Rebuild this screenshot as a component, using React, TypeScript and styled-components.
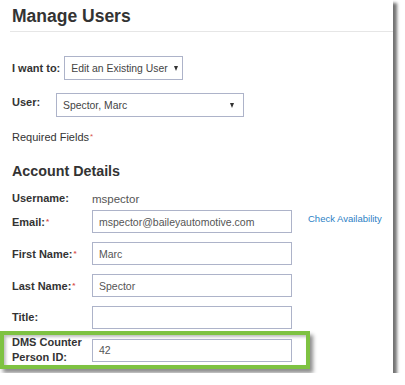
import React from "react";
import styled, { createGlobalStyle } from "styled-components";

const GlobalStyle = createGlobalStyle`
  body {
    margin: 0;
    background: #ffffff;
    font-family: "Liberation Sans", Arial, sans-serif;
  }
`;

const Panel = styled.div`
  width: 393px;
  height: 373px;
  box-sizing: border-box;
  padding-left: 12px;
  background: #ffffff;
  box-shadow: 4px 3px 3px rgba(0, 0, 0, 0.55);
`;

const Header = styled.div`
  margin-left: -2px;
  padding: 6px 0 5px 2px;
  border-bottom: 1px solid #e6e6e6;
`;

const Title = styled.h1`
  margin: 0;
  font-size: 17.5px;
  line-height: 20px;
  font-weight: bold;
  color: #333333;
`;

const Form = styled.div`
  display: flex;
  flex-direction: column;
  padding-top: 24px;
`;

const SelectRow = styled.div<{ $gap: number }>`
  display: flex;
  align-items: center;
  gap: ${(p) => p.$gap}px;
  margin-bottom: 13px;
`;

const Label = styled.span`
  flex-shrink: 0;
  white-space: nowrap;
  font-size: 11px;
  font-weight: bold;
  color: #333333;
  line-height: 15px;
`;

const Required = styled.span`
  color: #d9534f;
  font-size: 8px;
  vertical-align: 2px;
  margin-left: 1px;
`;

const Select = styled.div<{ $width: number }>`
  display: flex;
  align-items: center;
  justify-content: space-between;
  gap: 6px;
  flex-shrink: 0;
  box-sizing: border-box;
  width: ${(p) => p.$width}px;
  height: 24px;
  padding: 0 9px 0 6px;
  border: 1px solid #adb3c9;
  font-size: 10.4px;
  color: #444444;
  white-space: nowrap;
`;

const Caret = styled.span`
  flex-shrink: 0;
  width: 0;
  height: 0;
  border-left: 2.5px solid transparent;
  border-right: 2.5px solid transparent;
  border-top: 5px solid #333333;
`;

const Note = styled.div`
  font-size: 11px;
  line-height: 14px;
  color: #333333;
`;

const Section = styled.h2`
  margin: 18px 0 11px;
  font-size: 14.3px;
  line-height: 18px;
  font-weight: bold;
  color: #333333;
`;

const Fields = styled.div`
  display: flex;
  flex-direction: column;
  gap: 9px;
`;

const FieldRow = styled.div<{ $highlight?: boolean }>`
  display: flex;
  align-items: center;
  min-height: 23px;
  ${(p) =>
    p.$highlight &&
    `
    width: 310px;
    box-sizing: border-box;
    margin: -7px 0 0 -12px;
    padding: 0 14px 0 8px;
    border: 4px solid #7ec242;
    box-shadow: 3px 4px 4px rgba(0, 0, 0, 0.45),
      inset 2px 2px 3px rgba(0, 0, 0, 0.25);
  `}
`;

const FieldLabel = styled(Label)`
  width: 80px;
`;

const Value = styled.span`
  font-size: 11.5px;
  color: #555555;
`;

const Input = styled.div`
  display: flex;
  align-items: center;
  box-sizing: border-box;
  width: 200px;
  height: 23px;
  padding: 0 6px;
  border: 1px solid #adb3c9;
  font-size: 10.5px;
  color: #555555;
`;

const Link = styled.a`
  margin-left: 16px;
  margin-top: -6px;
  font-size: 9.5px;
  color: #2d7fc5;
  text-decoration: none;
  white-space: nowrap;
`;

type Field = {
  label: string;
  value: string;
  required?: boolean;
};

const fields: Field[] = [
  { label: "First Name:", value: "Marc", required: true },
  { label: "Last Name:", value: "Spector", required: true },
  { label: "Title:", value: "" },
];

const App: React.FC = () => {
  return (
    <>
      <GlobalStyle />
      <Panel>
        <Header>
          <Title>Manage Users</Title>
        </Header>
        <Form>
          <SelectRow $gap={4}>
            <Label>I want to:</Label>
            <Select $width={119}>
              Edit an Existing User
              <Caret />
            </Select>
          </SelectRow>
          <SelectRow $gap={14}>
            <Label style={{ width: 30, marginTop: -6 }}>User:</Label>
            <Select $width={188}>
              Spector, Marc
              <Caret />
            </Select>
          </SelectRow>
          <Note>
            Required Fields<Required>*</Required>
          </Note>
          <Section>Account Details</Section>
          <Fields>
            <FieldRow style={{ minHeight: 14, marginBottom: -5 }}>
              <FieldLabel>Username:</FieldLabel>
              <Value>mspector</Value>
            </FieldRow>
            <FieldRow>
              <FieldLabel>
                Email:<Required>*</Required>
              </FieldLabel>
              <Input>mspector@baileyautomotive.com</Input>
              <Link href="#">Check Availability</Link>
            </FieldRow>
            {fields.map((f) => (
              <FieldRow key={f.label}>
                <FieldLabel>
                  {f.label}
                  {f.required && <Required>*</Required>}
                </FieldLabel>
                <Input>{f.value}</Input>
              </FieldRow>
            ))}
            <FieldRow $highlight>
              <FieldLabel>
                DMS Counter
                <br />
                Person ID:
              </FieldLabel>
              <Input>42</Input>
            </FieldRow>
          </Fields>
        </Form>
      </Panel>
    </>
  );
};

export default App;
